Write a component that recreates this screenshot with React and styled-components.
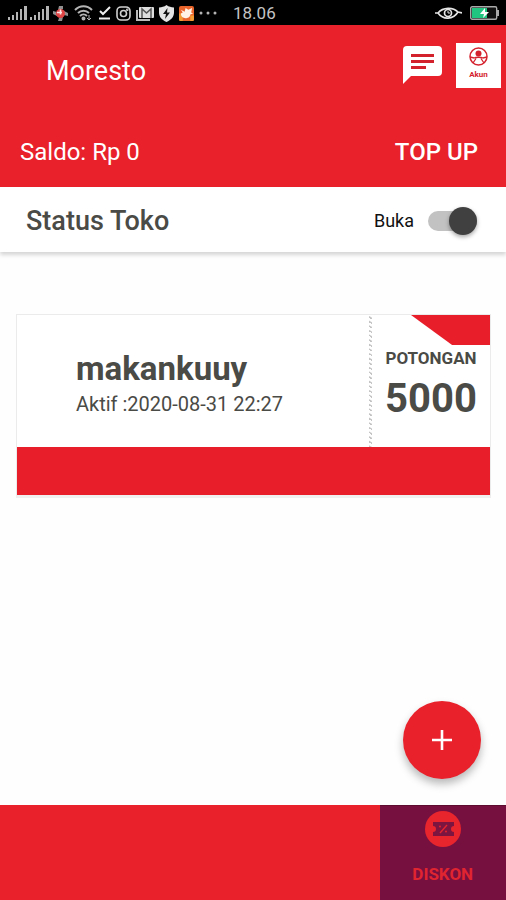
import React, { useState } from 'react'
import styled, { createGlobalStyle } from 'styled-components'

const GlobalStyle = createGlobalStyle`
  * {
    box-sizing: border-box;
  }

  body {
    margin: 0;
    background: #fefefe;
    font-family: Roboto, 'Liberation Sans', sans-serif;
    color: #4a4a46;
  }

  button {
    border: none;
    padding: 0;
    background: none;
    font-family: inherit;
    cursor: pointer;
  }
`

const Screen = styled.div`
  display: flex;
  flex-direction: column;
  min-height: 100vh;
`

const StatusBar = styled.div`
  display: flex;
  align-items: center;
  justify-content: space-between;
  height: 25px;
  padding: 1px 6px 0 8px;
  background: #000;
  color: #c4c4c4;

  svg {
    display: block;
  }
`

const StatusGroup = styled.div`
  display: flex;
  align-items: center;
  gap: ${(props) => props.$gap}px;
`

const Clock = styled.span`
  margin-left: 11px;
  font-size: 17px;
  line-height: 24px;
`

const Header = styled.header`
  background: #e8212b;
  color: #fff;
`

const TitleRow = styled.div`
  display: flex;
  align-items: center;
  justify-content: space-between;
  height: 92px;
  padding: 0 5px 0 46px;
`

const Title = styled.h1`
  margin: 0;
  font-size: 27px;
  font-weight: 400;
  line-height: 32px;
`

const Actions = styled.div`
  display: flex;
  align-items: center;
  gap: 14px;
  padding-bottom: 12px;
`

const IconButton = styled.button`
  display: block;

  svg {
    display: block;
  }
`

const AccountButton = styled.button`
  display: flex;
  flex-direction: column;
  align-items: center;
  width: 45px;
  height: 45px;
  padding-top: 4px;
  background: #fff;
  color: #d4232f;
  font-size: 8px;
  font-weight: 700;
  line-height: 18px;
`

const BalanceRow = styled.div`
  display: flex;
  align-items: center;
  justify-content: space-between;
  height: 70px;
  padding: 0 28px 0 20px;
  font-size: 24px;
  line-height: 28px;
`

const TopUp = styled.button`
  color: #fff;
  font-size: 24px;
  font-weight: 500;
  line-height: 28px;
`

const StoreStatus = styled.section`
  display: flex;
  align-items: center;
  justify-content: space-between;
  height: 65px;
  padding: 2px 29px 0 26px;
  background: #fff;
  box-shadow: 0 3px 4px rgba(0, 0, 0, 0.16);

  h2 {
    margin: 0;
    font-size: 27px;
    font-weight: 500;
    line-height: 32px;
  }
`

const SwitchLabel = styled.label`
  display: flex;
  align-items: center;
  gap: 14px;
  color: #111;
  font-size: 18px;
  line-height: 24px;
  cursor: pointer;
`

const Switch = styled.input`
  appearance: none;
  display: flex;
  align-items: center;
  width: 49px;
  height: 20px;
  margin: 0;
  border-radius: 10px;
  background: #c2c2c2;
  cursor: pointer;

  &::before {
    content: '';
    width: 28px;
    height: 28px;
    flex: none;
    margin-left: ${(props) => (props.checked ? 'auto' : '0')};
    border-radius: 50%;
    background: #404040;
    box-shadow: 0 2px 4px rgba(0, 0, 0, 0.35);
  }
`

const Content = styled.main`
  flex: 1;
  padding: 62px 15px 0 16px;
`

const Voucher = styled.article`
  border: 1px solid #ebebeb;
  border-bottom: 3px solid #f0f0f0;
  background: #fff;
`

const VoucherBody = styled.div`
  display: grid;
  grid-template-columns: 1fr 3px 118px;
  height: 132px;
`

const VoucherInfo = styled.div`
  padding: 34px 0 0 59px;

  h3 {
    margin: 0;
    font-size: 33px;
    font-weight: 700;
    line-height: 40px;
  }

  p {
    margin: 0;
    font-size: 20px;
    line-height: 30px;
  }
`

const Perforation = styled.div`
  background: repeating-linear-gradient(30deg, #c4c4c4 0 1px, #fff 2px 4px);
`

const Discount = styled.div`
  display: flex;
  flex-direction: column;
  align-items: center;
`

const Ribbon = styled.div`
  align-self: flex-end;
  width: 79px;
  height: 30px;
  margin-bottom: 2px;
  background: #e81f2b;
  clip-path: polygon(0 0, 100% 0, 100% 100%, 52% 100%);
`

const DiscountLabel = styled.span`
  font-size: 17px;
  font-weight: 700;
  line-height: 22px;
`

const DiscountValue = styled.strong`
  font-size: 40px;
  font-weight: 700;
  line-height: 60px;
`

const VoucherFooter = styled.div`
  height: 48px;
  background: #e81f2b;
`

const AddButton = styled.button`
  position: fixed;
  right: 25px;
  bottom: 121px;
  display: flex;
  align-items: center;
  justify-content: center;
  width: 78px;
  height: 78px;
  border-radius: 50%;
  background: #e8212b;
  box-shadow: 0 5px 8px rgba(0, 0, 0, 0.28);
`

const BottomNav = styled.nav`
  display: grid;
  grid-template-columns: 3fr 1fr;
  height: 95px;
  background: #e8212b;
`

const NavItem = styled.a`
  grid-column: 2;
  display: flex;
  flex-direction: column;
  align-items: center;
  gap: 16px;
  padding-top: 5px;
  border-top: 1px solid #5e0c30;
  background: #76103f;
  color: #e02430;
  font-size: 17px;
  font-weight: 700;
  line-height: 22px;
  text-decoration: none;
`

const Signal = () => (
  <svg width="20" height="14" viewBox="0 0 20 14" fill="#b4b4b4">
    <rect x="0" y="11" width="2" height="3" />
    <rect x="4" y="9" width="2" height="5" />
    <rect x="8" y="6" width="2" height="8" />
    <rect x="12" y="3" width="2" height="11" />
    <rect x="16" y="0" width="3" height="14" />
  </svg>
)

const Pinwheel = () => (
  <svg width="17" height="17" viewBox="0 0 17 17">
    <path d="M6 5L7 1h4v3zM12 6l4 2v3l-4-1zM11 12l-1 4H6l1-3zM5 11L1 9V6l4 1z" fill="#8f8f8f" />
    <circle cx="8.500" cy="8.500" r="4.500" fill="#e04545" />
    <path d="M8.500 4.500v5M5 7.500h5" stroke="#ffe4e4" strokeWidth="1.600" />
  </svg>
)

const Wifi = () => (
  <svg width="19" height="16" viewBox="0 0 19 16" fill="none" stroke="#b4b4b4" strokeWidth="2">
    <path d="M1 5C6 0 13 0 18 5M4 8c3-3 8-3 11 0M6 11c2-2 5-2 7 0" />
    <circle cx="9.500" cy="13.500" r="1" fill="#b4b4b4" />
    <path d="M15 10v5M13 13l2 2 2-2" strokeWidth="1" />
  </svg>
)

const CheckDone = () => (
  <svg width="13" height="14" viewBox="0 0 13 14" fill="none" stroke="#eee" strokeWidth="2">
    <path d="M2 5l3 3 7-7M1 12.500h11" />
  </svg>
)

const Camera = () => (
  <svg width="15" height="15" viewBox="0 0 15 15" fill="none" stroke="#d0d0d0" strokeWidth="1.600">
    <rect x="1" y="1" width="13" height="13" rx="4" />
    <circle cx="7.500" cy="7.500" r="3" />
    <circle cx="11.300" cy="3.700" r=".5" />
  </svg>
)

const Mail = () => (
  <svg width="18" height="15" viewBox="0 0 18 15">
    <path d="M1 4v10h13" fill="none" stroke="#bbb" strokeWidth="2" />
    <rect x="3" y="1" width="15" height="11" rx="1" fill="#dedede" />
    <path d="M6 12V3l4.500 4L15 3v9" fill="none" stroke="#555" strokeWidth="1.500" />
  </svg>
)

const Shield = () => (
  <svg width="15" height="17" viewBox="0 0 15 17">
    <path d="M7.500 0C10 2 12 2 15 2.500v5c0 4.500-3 7.500-7.500 9.500C3 15 0 12 0 7.500v-5C3 2 5 2 7.500 0z" fill="#e4e4e4" />
    <path d="M8.500 3L4 9h3l-1 5 5-6.500H8z" fill="#111" />
  </svg>
)

const Bird = () => (
  <svg width="15" height="15" viewBox="0 0 16 16">
    <rect width="16" height="16" rx="2" fill="#e9642a" />
    <path d="M0 8h4v8H2q-2 0-2-2zM12 10h4v4q0 2-2 2h-2z" fill="#f29a34" />
    <path d="M2 4l4 2 1-4 3 2 4-2-1 5 2 1-3 1c0 3-3 4-5 4-3 0-5-2-5-5l2-1z" fill="#fff3e6" />
  </svg>
)

const Dots = () => (
  <svg width="18" height="4" viewBox="0 0 18 4" fill="#b4b4b4">
    <circle cx="2" cy="2" r="1.500" />
    <circle cx="9" cy="2" r="1.500" />
    <circle cx="16" cy="2" r="1.500" />
  </svg>
)

const Eye = () => (
  <svg width="27" height="13" viewBox="0 0 27 13" fill="none" stroke="#e6e6e6" strokeWidth="1.700">
    <path d="M0 6h3C8 0 18 0 23 5l4 1M3 6c5 7 15 7 20-1" />
    <circle cx="13" cy="6" r="3.500" />
    <path d="M13 4v2h2" strokeWidth="1" />
  </svg>
)

const Battery = () => (
  <svg width="30" height="14" viewBox="0 0 30 14">
    <rect x=".7" y=".7" width="26" height="12.600" rx="1.500" fill="#111" stroke="#aaa" strokeWidth="1.400" />
    <rect x="2" y="2" width="15" height="10" fill="#22c580" />
    <rect x="27" y="4" width="2" height="6" fill="#aaa" />
    <path d="M15 2l-5 6h4l-1 4 6-6h-4z" fill="#fff" />
  </svg>
)

const ChatIcon = () => (
  <svg width="39" height="38" viewBox="0 0 39 38">
    <path d="M4 0h31q4 0 4 4v22q0 4-4 4H8l-8 8V4q0-4 4-4z" fill="#fff" />
    <path d="M8 9.500h23M8 15.500h23M8 21.500h15" stroke="#d4222d" strokeWidth="3" />
  </svg>
)

const AccountIcon = () => (
  <svg width="19" height="19" viewBox="0 0 19 19">
    <circle cx="9.500" cy="9.500" r="8.500" fill="none" stroke="#d4232f" strokeWidth="1.500" />
    <circle cx="9.500" cy="6.500" r="3" fill="#d4232f" />
    <path d="M1 10l4 1c2-1 7-1 9 0l4-1M4 16l3-4.500M15 16l-3-4.500" fill="none" stroke="#d4232f" strokeWidth="1.300" />
  </svg>
)

const PlusIcon = () => (
  <svg width="22" height="22" viewBox="0 0 22 22" stroke="#fff" strokeWidth="2.600">
    <path d="M11 1v20M1 11h20" />
  </svg>
)

const TicketIcon = () => (
  <svg width="36" height="36" viewBox="0 0 36 36">
    <circle cx="18" cy="18" r="18" fill="#e8242d" />
    <path d="M8 11h21v4q-3 0-3 3t3 3v4H8v-4q3 0 3-3t-3-3z" fill="#7c1540" />
    <path d="M22 14l-7 8" stroke="#e8242d" strokeWidth="1.300" />
    <circle cx="15" cy="15.500" r="1" fill="#e8242d" />
    <circle cx="21" cy="20.500" r="1" fill="#e8242d" />
  </svg>
)

const App = () => {
  const [open, setOpen] = useState(true)

  return (
    <Screen>
      <GlobalStyle />
      <StatusBar>
        <StatusGroup $gap={5}>
          <StatusGroup $gap={2}>
            <Signal />
            <Signal />
            <Pinwheel />
          </StatusGroup>
          <Wifi />
          <CheckDone />
          <Camera />
          <Mail />
          <Shield />
          <Bird />
          <Dots />
          <Clock>18.06</Clock>
        </StatusGroup>
        <StatusGroup $gap={8}>
          <Eye />
          <Battery />
        </StatusGroup>
      </StatusBar>
      <Header>
        <TitleRow>
          <Title>Moresto</Title>
          <Actions>
            <IconButton type="button" aria-label="Chat">
              <ChatIcon />
            </IconButton>
            <AccountButton type="button">
              <AccountIcon />
              Akun
            </AccountButton>
          </Actions>
        </TitleRow>
        <BalanceRow>
          <span>Saldo: Rp 0</span>
          <TopUp type="button">TOP UP</TopUp>
        </BalanceRow>
      </Header>
      <StoreStatus>
        <h2>Status Toko</h2>
        <SwitchLabel>
          Buka
          <Switch type="checkbox" checked={open} onChange={() => setOpen(!open)} />
        </SwitchLabel>
      </StoreStatus>
      <Content>
        <Voucher>
          <VoucherBody>
            <VoucherInfo>
              <h3>makankuuy</h3>
              <p>Aktif :2020-08-31 22:27</p>
            </VoucherInfo>
            <Perforation />
            <Discount>
              <Ribbon />
              <DiscountLabel>POTONGAN</DiscountLabel>
              <DiscountValue>5000</DiscountValue>
            </Discount>
          </VoucherBody>
          <VoucherFooter />
        </Voucher>
      </Content>
      <AddButton type="button" aria-label="Tambah">
        <PlusIcon />
      </AddButton>
      <BottomNav>
        <NavItem href="#diskon">
          <TicketIcon />
          DISKON
        </NavItem>
      </BottomNav>
    </Screen>
  )
}

export default App
